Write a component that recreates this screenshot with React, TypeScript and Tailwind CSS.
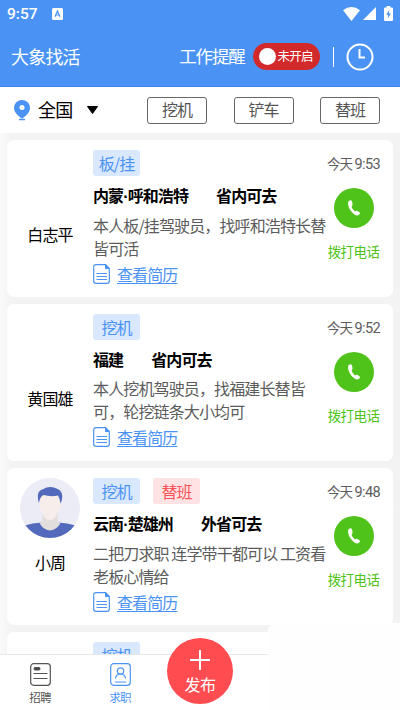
interface Tag {
  label: string;
  tone: "blue" | "red";
}

interface Worker {
  name: string;
  avatar?: boolean;
  tags: Tag[];
  place: string[];
  range: string;
  lines: string[];
  time: string;
}

const FILTERS = ["挖机", "铲车", "替班"];

const WORKERS: Worker[] = [
  {
    name: "白志平",
    tags: [{ label: "板/挂", tone: "blue" }],
    place: ["内蒙", "呼和浩特"],
    range: "省内可去",
    lines: ["本人板/挂驾驶员，找呼和浩特长替", "皆可活"],
    time: "9:53",
  },
  {
    name: "黄国雄",
    tags: [{ label: "挖机", tone: "blue" }],
    place: ["福建"],
    range: "省内可去",
    lines: ["本人挖机驾驶员，找福建长替皆", "可，轮挖链条大小均可"],
    time: "9:52",
  },
  {
    name: "小周",
    avatar: true,
    tags: [{ label: "挖机", tone: "blue" }, { label: "替班", tone: "red" }],
    place: ["云南", "楚雄州"],
    range: "外省可去",
    lines: ["二把刀求职 连学带干都可以 工资看", "老板心情给"],
    time: "9:48",
  },
];

function StatusBar() {
  return (
    <div className="flex h-[27px] items-center pl-[7px] pr-[7px] text-white">
      <span className="mt-[2px] font-[Roboto] text-[15.5px] font-medium leading-none">9:57</span>
      <svg className="ml-[14px]" width="11" height="12" viewBox="0 0 11 12">
        <rect width="11" height="12" rx="1.5" fill="#fff" />
        <path d="M3 8.7 5.5 3 8 8.7M3.9 7h3.2" fill="none" stroke="#4a93f5" strokeWidth="1.2" />
      </svg>
      <div className="ml-auto flex items-center">
        <svg width="17" height="14" viewBox="0 0 17 14">
          <path d="M0 3.2Q8.5-3.2 17 3.2L8.5 14Z" fill="#fff" />
        </svg>
        <svg className="ml-[3px]" width="13" height="13" viewBox="0 0 13 13">
          <path d="M13 0v13H0Z" fill="#fff" />
        </svg>
        <svg className="ml-[8px]" width="9" height="15" viewBox="0 0 9 15">
          <path d="M2.7 0h3.6v1.5H8q1 0 1 1V14q0 1-1 1H1q-1 0-1-1V2.5q0-1 1-1h1.7Z" fill="#fff" />
          <path d="M5.3 4 2.2 8.8h1.9L3.7 12.5 6.8 7.6H4.9Z" fill="#4a93f5" />
        </svg>
      </div>
    </div>
  );
}

function Header() {
  return (
    <header className="h-[87px] border-b border-[#3d86ee] bg-[#4a93f5]">
      <StatusBar />
      <div className="flex h-[59px] items-center pl-[11px] text-white">
        <h1 className="mb-px text-[18px] font-normal leading-none tracking-[-0.8px]">大象找活</h1>
        <span className="mb-px ml-auto text-[17.5px] leading-none tracking-[-1.2px]">工作提醒</span>
        <div className="ml-[8px] flex h-[27px] w-[67px] items-center rounded-full bg-[#d22a2b] pl-[6px]">
          <span className="size-[17px] rounded-full bg-white" />
          <span className="ml-[2px] text-[12.5px] leading-none tracking-[-0.8px]">未开启</span>
        </div>
        <span className="ml-[13px] h-[20px] w-[1.5px] bg-white" />
        <svg className="ml-[12px] mr-[26px]" width="28" height="28" viewBox="0 0 28 28" fill="none" stroke="#fff" strokeWidth="2">
          <circle cx="14" cy="14" r="12.5" />
          <path d="M13.5 6v8.5H19" />
        </svg>
      </div>
    </header>
  );
}

function FilterBar() {
  return (
    <div className="flex h-[46px] shrink-0 items-center bg-white pl-[14px] pr-[20px]">
      <svg width="16" height="21" viewBox="0 0 16 21">
        <path d="M8 0a8 8 0 0 1 8 8c0 4.200-4.500 8.500-8 10.500C4.500 16.500 0 12.200 0 8a8 8 0 0 1 8-8Z" fill="#4a93f5" />
        <circle cx="8" cy="7.5" r="2.500" fill="#fff" />
        <path d="M5 19.500h6" stroke="#4a93f5" strokeWidth="1.5" />
      </svg>
      <span className="mb-[2px] ml-[8px] text-[18px] leading-none tracking-[-0.8px] text-black">全国</span>
      <svg className="ml-[15px]" width="11" height="8" viewBox="0 0 11 8">
        <path d="M.5.5h10L5.5 7.500Z" fill="#000" stroke="#000" strokeLinejoin="round" />
      </svg>
      <div className="ml-auto flex gap-[26.5px]">
        {FILTERS.map(label => (
          <button key={label} className="h-[27px] w-[60px] rounded-[3px] border border-[#666] pb-[2px] text-[16px] leading-none tracking-[-1px] text-[#555]">
            {label}
          </button>
        ))}
      </div>
    </div>
  );
}

function Avatar() {
  return (
    <svg width="60" height="60" viewBox="0 0 60 60">
      <clipPath id="face">
        <circle cx="30" cy="30" r="30" />
      </clipPath>
      <g clipPath="url(#face)">
        <rect width="60" height="60" fill="#ebecf5" />
        <path d="M5 47.500Q12 45 22 44.500h16q10 .5 17 3V60H5Z" fill="#5369bb" />
        <path d="M22.500 34h15v8.500q1 2 3 2.500-3.500 7-10.500 7.500-7-.5-10.500-7.500 2.500-.5 3-2.500Z" fill="#e2dedd" />
        <path d="M19.500 17h21v11q0 4-2.500 5-2 9-8 9t-8-9q-2.500-1-2.500-5Z" fill="#f7eeec" />
        <path d="M19 25.500Q15.500 13 22.500 11.500q7.500-4.500 15-.5 5 2 4.800 8-.3 4-1.800 6.500-.5-4.500-2.500-8-7 1.500-14.500-.5-4 2-4.500 8.500Z" fill="#5369bb" />
      </g>
    </svg>
  );
}

function ResumeIcon() {
  return (
    <svg width="17" height="20" viewBox="0 0 17 20" fill="none" stroke="#4a93f5">
      <path d="M12.500.7H3Q.7.7.7 3v14Q.7 19.300 3 19.300h11q2.300 0 2.300-2.300V4.500Z" strokeWidth="1.2" />
      <path d="M12.500.7v3.800h3.800Z" fill="#4a93f5" />
      <path d="M3.500 9.500h10.500M3.500 12.500h10.500M3.500 15.500h10.500" />
    </svg>
  );
}

function TagPill({ label, tone }: Tag) {
  const color = tone === "blue" ? "bg-[#d9e8fd] text-[#4a93f5]" : "bg-[#ffe2e3] text-[#fb5357]";
  return (
    <span className={`flex h-[26px] w-[47px] items-center justify-center rounded-[3px] pb-px text-[16px] leading-none tracking-[-0.9px] ${color}`}>
      {label}
    </span>
  );
}

function WorkerCard({ worker }: { worker: Worker }) {
  return (
    <article className="relative flex h-[157px] shrink-0 rounded-[7px] bg-white">
      <div className="flex w-[86px] flex-col items-center pt-[10px]">
        <div className="size-[60px]">{worker.avatar && <Avatar />}</div>
        <span className="mt-[15px] text-[16px] leading-[18px] tracking-[-0.9px] text-black">{worker.name}</span>
      </div>
      <div className="whitespace-nowrap pt-[10px]">
        <div className="flex gap-[13px]">
          {worker.tags.map(tag => <TagPill key={tag.label} {...tag} />)}
        </div>
        <div className="mt-[8px] flex gap-[28px] text-[16px] font-bold leading-[23px] tracking-[-0.9px] text-black">
          <span>
            {worker.place[0]}
            {worker.place[1] && <span className="font-['Liberation_Sans']">·</span>}
            {worker.place[1]}
          </span>
          <span>{worker.range}</span>
        </div>
        <div className="mt-[6px] text-[16px] leading-[23px] tracking-[-0.87px] text-[#5c5c5c]">
          {worker.lines.map(line => <p key={line}>{line}</p>)}
        </div>
        <a className="mt-[4px] flex items-center text-[#4a93f5]">
          <ResumeIcon />
          <span className="ml-[7px] text-[16px] leading-[20px] tracking-[-0.9px] underline underline-offset-2">查看简历</span>
        </a>
      </div>
      {/* Call column, the description runs close to it */}
      <div className="absolute right-[13px] top-[15px] flex w-[53px] flex-col items-center whitespace-nowrap">
        <span className="text-[13.5px] leading-[16px] tracking-[-0.8px] text-[#5c5c5c]">
          今天 <span className="font-[Roboto] text-[14.5px] tracking-[-0.6px]">{worker.time}</span>
        </span>
        <span className="ml-px mt-[15px] flex size-[40px] items-center justify-center rounded-full bg-[#50c31a]">
          <svg width="14" height="18" viewBox="0 0 14 18">
            <path d="M1 4Q1 1.500 3.500 1.300 5 1.200 5.200 3L5.500 5.500Q5.500 7 4.500 7.700 5.800 10.800 8 12.500 9.300 11.500 10.500 12L12.500 13.200Q13.700 14.500 12 15.800 10 17.200 7.500 15.500 1 10.500 1 4Z" fill="#fff" />
          </svg>
        </span>
        <span className="mt-[15px] text-[13.5px] leading-[16px] tracking-[-0.6px] text-[#50c31a]">拨打电话</span>
      </div>
    </article>
  );
}

function BottomNav() {
  return (
    <nav className="relative h-[56px] shrink-0 border-t border-[#e8e8e8] bg-white text-[11.5px] leading-none tracking-[-0.8px]">
      <div className="flex h-full pt-[8px]">
        <div className="flex w-[80px] flex-col items-center text-[#555]">
          <svg width="21" height="23" viewBox="0 0 21 23" fill="none" stroke="#555">
            <rect x=".7" y=".7" width="19.600" height="21.600" rx="3" strokeWidth="1.2" />
            <rect x="4" y="4.500" width="6" height="2.500" rx="1" fill="#444" />
            <path d="M3.500 10.500h14M3.500 15.500h14" />
          </svg>
          <span className="mt-[6px]">招聘</span>
        </div>
        <div className="flex w-[80px] flex-col items-center text-[#4a93f5]">
          <svg width="21" height="23" viewBox="0 0 21 23" fill="none" stroke="#4a93f5" strokeWidth="1.2">
            <rect x=".7" y=".7" width="19.600" height="21.600" rx="3" />
            <circle cx="10.500" cy="8" r="3.200" />
            <path d="M5.500 15.500q.5-4.500 5-4.500t5 4.500M5 19h11" />
          </svg>
          <span className="mt-[6px]">求职</span>
        </div>
      </div>
      <button className="absolute left-[167px] top-[-17px] z-20 flex size-[66px] flex-col items-center rounded-full bg-[#fe4c50] pt-[12px] text-white">
        <svg width="20" height="20" viewBox="0 0 20 20">
          <path d="M10 0v20M0 10h20" stroke="#fff" strokeWidth="2" />
        </svg>
        <span className="mt-[6px] text-[16px] leading-none tracking-[-0.5px]">发布</span>
      </button>
    </nav>
  );
}

export default function App() {
  return (
    <div className="relative flex h-[710px] w-[400px] flex-col overflow-hidden bg-white font-['Noto_Sans_CJK_SC',sans-serif]">
      <Header />
      <FilterBar />
      <main className="flex min-h-0 flex-1 flex-col gap-[7px] overflow-hidden bg-linear-to-r from-[#fafafa] via-[#f3f3f3] via-3% to-[#f3f3f3] px-[7px] pt-[7px]">
        {WORKERS.map(worker => <WorkerCard key={worker.name} worker={worker} />)}
        <article className="flex h-[157px] shrink-0 rounded-[7px] bg-white pl-[86px] pt-[10px]">
          <TagPill label="挖机" tone="blue" />
        </article>
      </main>
      <BottomNav />
      {/* Light panel over the lower right corner */}
      <div className="absolute bottom-0 right-0 z-10 h-[87px] w-[132px] rounded-tl-[8px] bg-[#fefefe]" />
    </div>
  );
}
